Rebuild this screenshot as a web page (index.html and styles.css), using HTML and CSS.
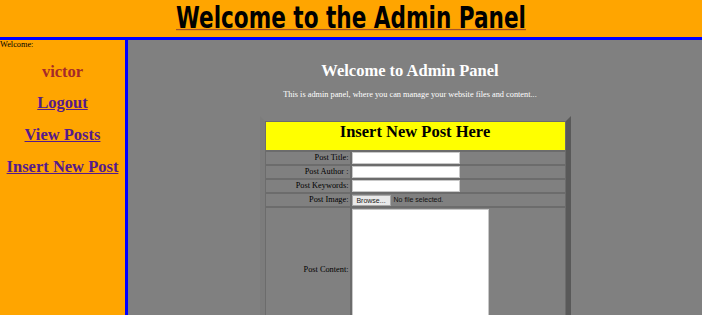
FILE: index.html
```html
<!DOCTYPE html>
<html>
<head>
<meta charset="utf-8">
<title>Admin Panel</title>
<link rel="stylesheet" href="styles.css">
</head>
<body>
<header class="top">
  <h1 class="top-title"><span class="top-text">Welcome to the Admin Panel</span></h1>
</header>
<div class="layout">
  <aside class="side">
    <div class="side-welcome">Welcome:</div>
    <div class="side-user">victor</div>
    <a class="side-link" href="#">Logout</a>
    <a class="side-link" href="#">View Posts</a>
    <a class="side-link" href="#">Insert New Post</a>
  </aside>
  <main class="content">
    <h2 class="content-title">Welcome to Admin Panel</h2>
    <p class="content-sub">This is admin panel, where you can manage your website files and content...</p>
    <form class="post-form">
      <table class="post-table">
        <tr>
          <td class="cell head" colspan="2"><h3 class="head-title">Insert New Post Here</h3></td>
        </tr>
        <tr>
          <td class="cell label">Post Title:</td>
          <td class="cell field"><input class="text-in" type="text"></td>
        </tr>
        <tr>
          <td class="cell label">Post Author :</td>
          <td class="cell field"><input class="text-in" type="text"></td>
        </tr>
        <tr>
          <td class="cell label">Post Keywords:</td>
          <td class="cell field"><input class="text-in" type="text"></td>
        </tr>
        <tr>
          <td class="cell label">Post Image:</td>
          <td class="cell field"><span class="file-btn">Browse...</span><span class="file-name">No file selected.</span></td>
        </tr>
        <tr>
          <td class="cell label">Post Content:</td>
          <td class="cell field"><textarea class="area"></textarea></td>
        </tr>
      </table>
    </form>
  </main>
</div>
</body>
</html>
```

FILE: styles.css
```css
html, body {
  margin: 0;
  padding: 0;
  overflow: hidden;
  height: 100%;
}
body {
  font-family: "Liberation Serif", "Times New Roman", serif;
  background: #808080;
  display: flex;
  flex-direction: column;
}
.top {
  background: #ffa500;
  height: 37px;
  border-bottom: 3px solid #0000ff;
  flex: none;
}
.top-title {
  margin: 0;
  text-align: center;
  font-family: "Comic Sans MS", "DejaVu Sans Condensed", "DejaVu Sans", sans-serif;
  font-stretch: condensed;
  font-weight: bold;
  font-size: 24px;
  line-height: 30px;
  padding-top: 3px;
  color: #000;
}
.top-text {
  display: inline-block;
  transform: scaleY(1.22);
  text-decoration: underline;
  text-decoration-color: #a0522d;
  text-decoration-thickness: 1px;
  text-underline-offset: 1px;
}
.layout {
  flex: 1;
  display: flex;
}
.side {
  width: 125px;
  flex: none;
  background: #ffa500;
  border-right: 3px solid #0000ff;
  display: flex;
  flex-direction: column;
  align-items: center;
}
.side-welcome {
  align-self: flex-start;
  font-size: 8.3px;
  line-height: 10px;
  color: #000;
}
.side-user {
  font-size: 16.5px;
  font-weight: bold;
  color: #a52a2a;
  line-height: 20px;
  margin-top: 12px;
}
.side-link {
  font-size: 16.5px;
  font-weight: bold;
  color: #551a8b;
  text-decoration: underline;
  line-height: 20px;
  margin-top: 10.5px;
}
.side-link + .side-link {
  margin-top: 12px;
}
.content {
  flex: 1;
  background: #808080;
  display: flex;
  flex-direction: column;
  align-items: center;
}
.content-title {
  margin: 21px 0 0 -10px;
  font-size: 16.5px;
  line-height: 20px;
  color: #fff;
  font-weight: bold;
}
.content-sub {
  margin: 9px 0 0 -10px;
  font-size: 8.3px;
  line-height: 10px;
  color: #fff;
}
.post-form {
  margin-top: 16px;
}
.post-table {
  width: 311px;
  border-collapse: separate;
  border-spacing: 0;
  border-style: solid;
  border-width: 5px;
  border-color: #808080 #595959 #595959 #7c7c7c;
  background: #808080;
}
.cell {
  border: 1px solid #6c6c6c;
  padding: 0;
  font-size: 8.3px;
  color: #000;
}
.head {
  background: #ffff00;
  height: 28px;
  vertical-align: top;
  text-align: center;
}
.head-title {
  margin: 0;
  padding-top: 0;
  font-size: 16.5px;
  line-height: 20px;
  font-weight: bold;
}
.label {
  width: 83px;
  text-align: right;
  padding-right: 1px;
  height: 12px;
  line-height: 12px;
  white-space: nowrap;
}
.field {
  height: 12px;
  line-height: 12px;
}
.text-in {
  display: block;
  box-sizing: border-box;
  width: 108px;
  height: 12px;
  margin: 0;
  border: 1px solid #c8c8c8;
  background: #fff;
  padding: 0;
}
.file-btn {
  display: inline-block;
  box-sizing: border-box;
  height: 11px;
  width: 39px;
  background: #e9e9e9;
  border: 1px solid #a9a9a9;
  font-family: "Liberation Sans", Arial, sans-serif;
  font-size: 7px;
  line-height: 9px;
  text-align: center;
  color: #222;
  vertical-align: middle;
}
.file-name {
  margin-left: 3px;
  font-family: "Liberation Sans", Arial, sans-serif;
  font-size: 7px;
  color: #111;
  vertical-align: middle;
}
.area {
  display: block;
  box-sizing: border-box;
  width: 137px;
  height: 122px;
  margin: 1px 0;
  border: 1px solid #c8c8c8;
  background: #fff;
  padding: 0;
  resize: none;
}
```
